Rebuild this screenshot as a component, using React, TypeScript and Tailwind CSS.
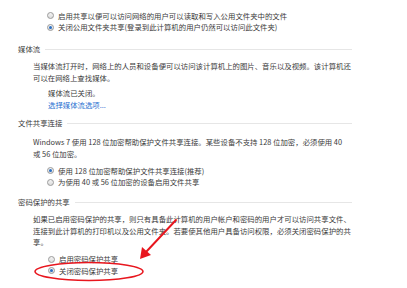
import React from "react";

const Radio = ({ checked = false }: { checked?: boolean }) => (
  <span className="relative inline-flex h-[7px] w-[7px] shrink-0 items-center justify-center rounded-full border border-[#9a9a9a] bg-gradient-to-b from-[#f4f4f4] to-[#dcdcdc]">
    {checked && <span className="h-[3px] w-[3px] rounded-full bg-[#2a6fc4]" />}
  </span>
);

const Option = ({ checked, label }: { checked?: boolean; label: string }) => (
  <div className="flex h-[11.5px] items-center gap-[4px] whitespace-nowrap">
    <Radio checked={checked} />
    <span>{label}</span>
  </div>
);

const Header = ({ title, className = "" }: { title: string; className?: string }) => (
  <div className={`flex h-[12px] items-center gap-[5px] pl-[18px] pr-[55px] ${className}`}>
    <span className="whitespace-nowrap">{title}</span>
    <div className="h-px flex-1 bg-[#e6e6e6]" />
  </div>
);

const Lines = ({ lines, className = "" }: { lines: string[]; className?: string }) => (
  <div className={`pl-[33px] ${className}`}>
    {lines.map((l) => (
      <div key={l} className="h-[12px] leading-[12px] whitespace-nowrap">
        {l}
      </div>
    ))}
  </div>
);

export default function App() {
  return (
    <div
      className="relative h-[288px] w-[407px] overflow-hidden bg-white text-[7.4px] leading-[12px] text-[#3a3a3a]"
      style={{ fontFamily: '"Noto Sans CJK SC", "Noto Sans", sans-serif' }}
    >
      <div className="pl-[47px] pt-[10px]">
        <Option label="启用共享以便可以访问网络的用户可以读取和写入公用文件夹中的文件" />
        <Option checked label="关闭公用文件夹共享(登录到此计算机的用户仍然可以访问此文件夹)" />
      </div>

      <Header title="媒体流" className="mt-[10px]" />
      <Lines
        className="mt-[5px]"
        lines={[
          "当媒体流打开时，网络上的人员和设备便可以访问该计算机上的图片、音乐以及视频。该计算机还",
          "可以在网络上查找媒体。",
        ]}
      />
      <div className="mt-[3px] pl-[48px]">
        <div className="h-[12px]">媒体流已关闭。</div>
        <div className="h-[12px] text-[#1f6fd1]">选择媒体流选项...</div>
      </div>

      <Header title="文件共享连接" className="mt-[6px]" />
      <Lines
        className="mt-[7px]"
        lines={[
          "Windows 7 使用 128 位加密帮助保护文件共享连接。某些设备不支持 128 位加密，必须使用 40",
          "或 56 位加密。",
        ]}
      />
      <div className="mt-[5px] pl-[47px]">
        <Option checked label="使用 128 位加密帮助保护文件共享连接(推荐)" />
        <Option label="为使用 40 或 56 位加密的设备启用文件共享" />
      </div>

      <Header title="密码保护的共享" className="mt-[8px]" />
      <div className="mt-[5px] pl-[33px] leading-[11.5px]">
        <div className="whitespace-nowrap">如果已启用密码保护的共享，则只有具备此计算机的用户帐户和密码的用户才可以访问共享文件、</div>
        <div className="whitespace-nowrap">连接到此计算机的打印机以及公用文件夹。若要使其他用户具备访问权限，必须关闭密码保护的共</div>
        <div className="whitespace-nowrap">享。</div>
      </div>
      <div className="mt-[6px] pl-[48px]">
        <Option label="启用密码保护共享" />
        <Option checked label="关闭密码保护共享" />
      </div>

      {/* red annotation drawn over the screenshot */}
      <svg className="pointer-events-none absolute left-0 top-0" width="407" height="288" viewBox="0 0 407 288">
        <ellipse cx="89" cy="271.5" rx="54" ry="9" fill="none" stroke="#e8161e" strokeWidth="1.5" />
        <line x1="176" y1="220" x2="146" y2="252" stroke="#e8161e" strokeWidth="2" strokeLinecap="round" />
        <polygon points="140,259 142,247 151,255" fill="#e8161e" />
      </svg>
    </div>
  );
}
